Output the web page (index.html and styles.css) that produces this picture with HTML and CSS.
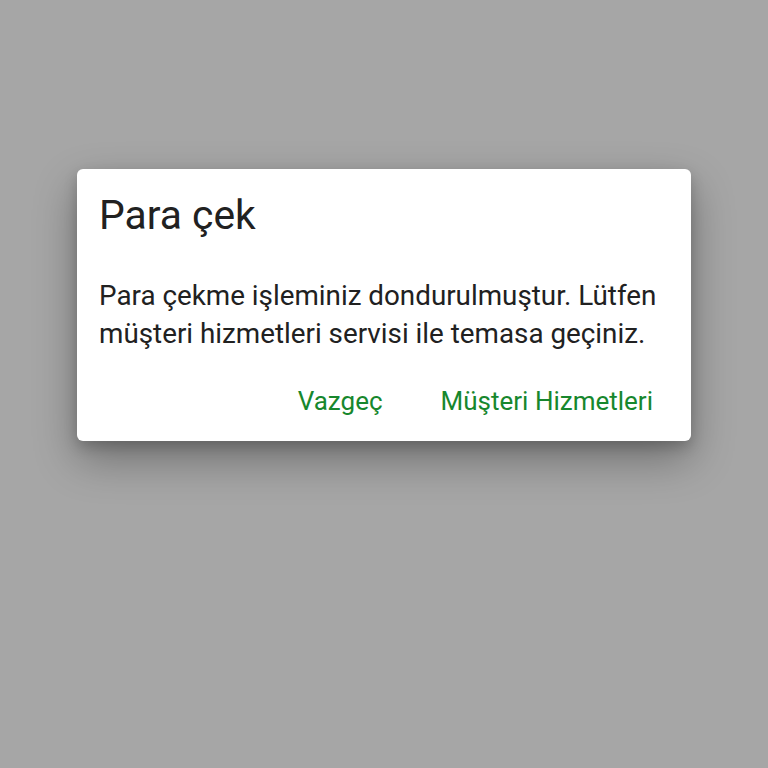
FILE: index.html
```html
<!DOCTYPE html>
<html lang="tr">
<head>
<meta charset="utf-8">
<link rel="stylesheet" href="styles.css">
</head>
<body>
<div class="screen">
  <div class="dialog">
    <h1 class="title">Para çek</h1>
    <p class="message">Para çekme işleminiz dondurulmuştur. Lütfen müşteri hizmetleri servisi ile temasa geçiniz.</p>
    <div class="actions">
      <button class="btn">Vazgeç</button>
      <button class="btn">Müşteri Hizmetleri</button>
    </div>
  </div>
</div>
</body>
</html>
```
FILE: styles.css
```css
html, body {
  margin: 0;
  padding: 0;
}
body {
  background: #a6a6a6;
  font-family: Roboto, "Noto Sans", sans-serif;
}
.screen {
  width: 768px;
  height: 768px;
  padding-top: 169px;
  padding-left: 77px;
  box-sizing: border-box;
}
.dialog {
  width: 614px;
  height: 272px;
  box-sizing: border-box;
  background: #ffffff;
  border-radius: 6px;
  box-shadow: 0 18px 44px rgba(0, 0, 0, 0.33), 0 6px 14px rgba(0, 0, 0, 0.18);
  padding: 22px 22px 0 22px;
}
.title {
  margin: 0;
  font-weight: 400;
  font-size: 40.8px;
  line-height: 48px;
  color: #212121;
}
.message {
  margin: 38px 0 0 0;
  font-size: 27.8px;
  line-height: 38px;
  color: #212121;
}
.actions {
  display: flex;
  justify-content: flex-end;
  gap: 58px;
  margin-top: 30px;
  padding-right: 16px;
}
.btn {
  border: none;
  background: none;
  padding: 0;
  font-family: Roboto, "Noto Sans", sans-serif;
  font-size: 26px;
  line-height: 36px;
  color: #17872d;
}
```
